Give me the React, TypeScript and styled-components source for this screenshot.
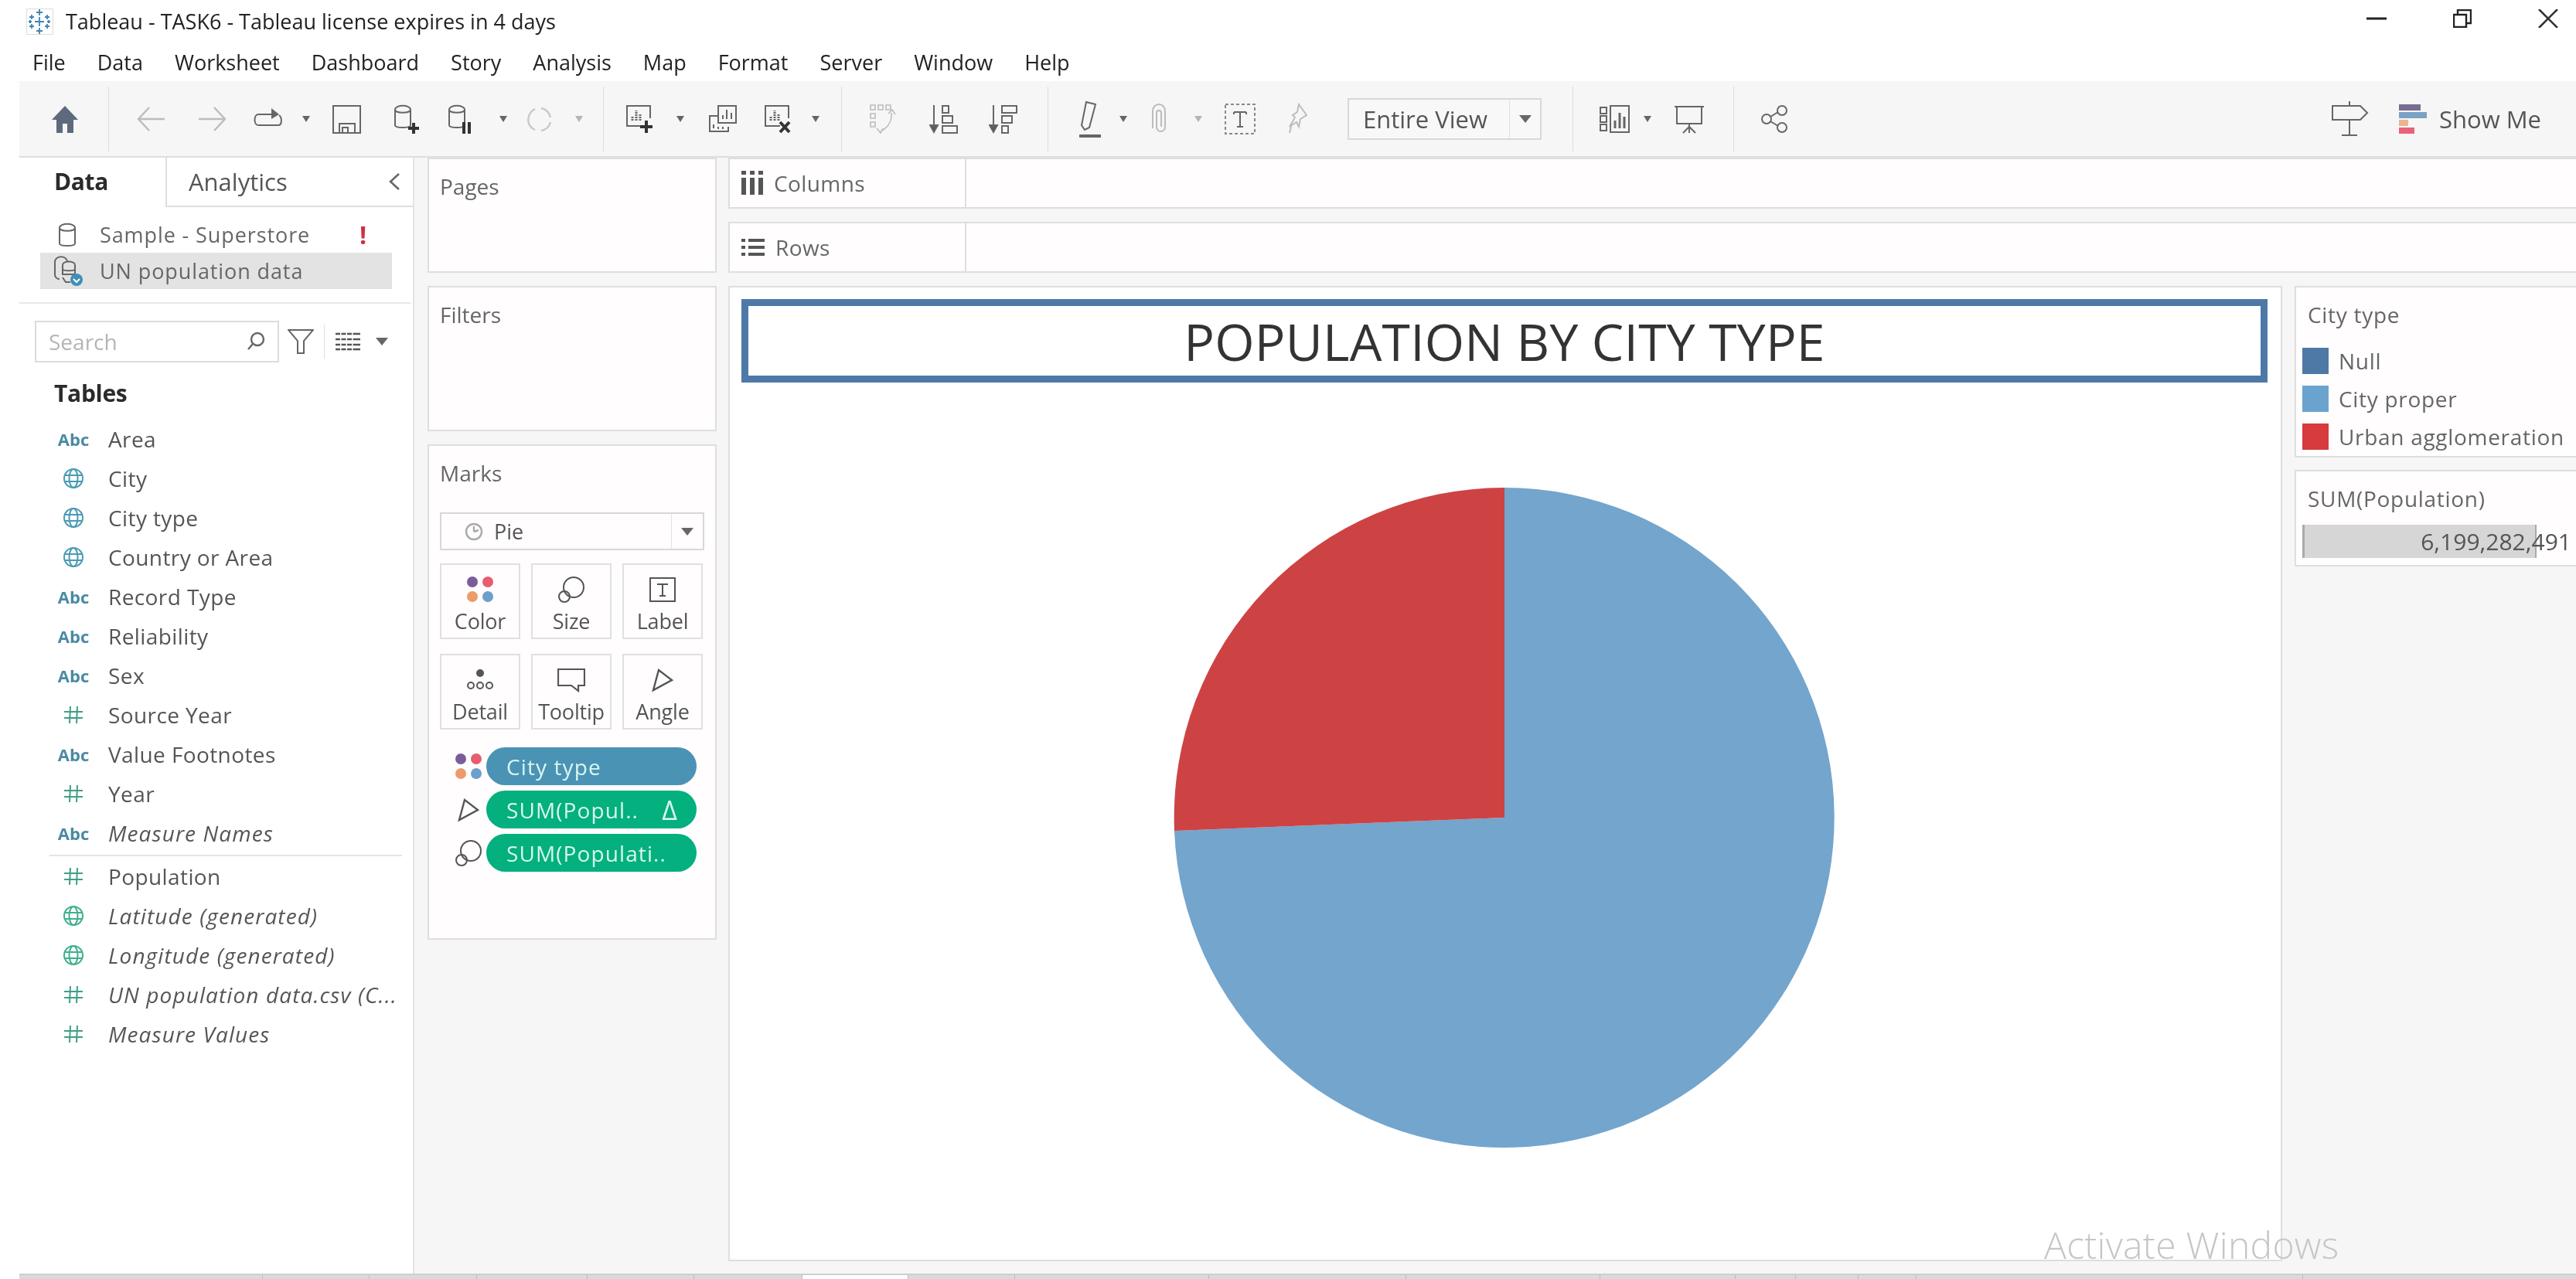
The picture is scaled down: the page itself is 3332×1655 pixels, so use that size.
import React from "react";
import styled, { createGlobalStyle } from "styled-components";

const GlobalStyle = createGlobalStyle`
	html, body {
		margin: 0;
		padding: 0;
		background: #fff;
		overflow: hidden;
	}
	* {
		box-sizing: border-box;
	}
`;

const Root = styled.div`
	position: relative;
	width: 3332px;
	height: 1655px;
	overflow: hidden;
	display: flex;
	flex-direction: column;
	background: #fff;
	font-family: "Open Sans", "Liberation Sans", sans-serif;
	color: #555;
	filter: blur(0.6px);
`;

const TitleBar = styled.div`
	height: 55px;
	display: flex;
	align-items: center;
	padding-left: 34px;
	flex: none;
`;

const TitleText = styled.span`
	margin-left: 16px;
	font-size: 27px;
	color: #222;
`;

const WindowButtons = styled.div`
	margin-left: auto;
	display: flex;
	align-items: center;
	gap: 86px;
	padding-right: 23px;
	height: 100%;
	padding-bottom: 8px;
`;

const MenuBar = styled.div`
	height: 50px;
	display: flex;
	align-items: center;
	padding-left: 42px;
	gap: 41px;
	flex: none;
`;

const MenuItem = styled.span`
	font-size: 27px;
	color: #222;
`;

const Toolbar = styled.div`
	height: 99px;
	margin-left: 25px;
	flex: none;
	display: flex;
	align-items: center;
	background: #f6f6f6;
	border-bottom: 2px solid #dedede;
	padding-right: 45px;
`;

const Slot = styled.div<{ $w?: number; $ml: number }>`
	flex: none;
	width: ${(p) => p.$w ?? 40}px;
	margin-left: ${(p) => p.$ml}px;
	height: 56px;
	display: flex;
	align-items: center;
	justify-content: center;
`;

const Sep = styled.div<{ $ml: number }>`
	flex: none;
	width: 1px;
	height: 84px;
	margin-left: ${(p) => p.$ml}px;
	background: #dcdcdc;
`;

const Caret = styled.i<{ $light?: boolean; $ml?: number; $big?: boolean }>`
	flex: none;
	display: block;
	width: 0;
	height: 0;
	margin-left: ${(p) => p.$ml ?? 0}px;
	border-left: ${(p) => (p.$big ? 8 : 5)}px solid transparent;
	border-right: ${(p) => (p.$big ? 8 : 5)}px solid transparent;
	border-top: ${(p) => (p.$big ? 10 : 8)}px solid ${(p) => (p.$light ? "#b5b5b5" : "#666")};
`;

const ViewSelect = styled.div`
	flex: none;
	width: 251px;
	height: 54px;
	margin-left: 45px;
	display: flex;
	align-items: center;
	border: 2px solid #d8d8d8;
	background: #f8f8f8;
`;

const ViewSelectText = styled.span`
	width: 208px;
	padding-left: 18px;
	font-size: 31px;
	color: #555;
	border-right: 1px solid #e0e0e0;
	line-height: 50px;
	white-space: nowrap;
`;

const ViewSelectArrow = styled.div`
	flex: 1;
	display: flex;
	justify-content: center;
`;

const ShowMe = styled.div`
	margin-left: auto;
	display: flex;
	align-items: center;
	font-size: 31px;
	color: #555;
`;

const ShowMeBars = styled.svg`
	margin-left: 38px;
`;

const ShowMeLabel = styled.span`
	margin-left: 16px;
`;

const Workspace = styled.div`
	flex: 1;
	display: flex;
	min-height: 0;
`;

const LeftPane = styled.aside`
	flex: none;
	width: 536px;
	padding-left: 25px;
	border-right: 2px solid #e3e3e3;
	background: #fff;
	display: flex;
	flex-direction: column;
`;

const Tabs = styled.div`
	height: 64px;
	display: flex;
	flex: none;
`;

const DataTab = styled.div`
	width: 189px;
	padding-left: 45px;
	line-height: 62px;
	font-size: 30px;
	font-weight: 700;
	color: #2b2b2b;
	letter-spacing: -0.4px;
`;

const AnalyticsTab = styled.div`
	flex: 1;
	display: flex;
	align-items: center;
	justify-content: space-between;
	padding: 0 16px 0 28px;
	border-left: 2px solid #dedede;
	border-bottom: 2px solid #dedede;
	font-size: 31px;
	color: #555;
`;

const SourceList = styled.div`
	flex: none;
	height: 125px;
	padding: 12px 0 0 27px;
	border-bottom: 2px solid #e8e8e8;
	margin-right: 3px;
`;

const SourceRow = styled.div<{ $active?: boolean }>`
	width: 455px;
	height: 47px;
	display: flex;
	align-items: center;
	padding-left: 20px;
	font-size: 27px;
	letter-spacing: 0.9px;
	color: #666;
	background: ${(p) => (p.$active ? "#e3e3e3" : "transparent")};
`;

const SourceName = styled.span`
	margin-left: 27px;
	flex: 1;
`;

const Bang = styled.span`
	color: #cf3045;
	font-size: 32px;
	font-weight: 700;
	margin-right: 32px;
`;

const SourceIcon = styled.svg`
	margin: 0 -9px 0 -5px;
	flex: none;
`;

const SearchRow = styled.div`
	flex: none;
	margin: 22px 0 0 20px;
	display: flex;
	align-items: center;
	height: 54px;
`;

const SearchBox = styled.div`
	width: 316px;
	height: 54px;
	border: 2px solid #dcdcdc;
	display: flex;
	align-items: center;
	justify-content: space-between;
	padding: 0 16px;
	font-size: 28px;
	color: #b5b5b5;
`;

const FilterIcon = styled.svg`
	margin-left: 11px;
	flex: none;
`;

const SearchSep = styled.div`
	width: 1px;
	height: 44px;
	background: #dedede;
	margin: 0 14px 0 13px;
`;

const TablesHead = styled.div`
	flex: none;
	margin: 18px 0 0 45px;
	font-size: 30px;
	font-weight: 700;
	color: #2b2b2b;
	letter-spacing: -0.3px;
	line-height: 44px;
`;

const FieldList = styled.div`
	margin-top: 11px;
	padding-left: 45px;
	display: flex;
	flex-direction: column;
`;

const FieldRow = styled.div`
	height: 51px;
	display: flex;
	align-items: center;
`;

const FieldRule = styled.div`
	height: 2px;
	width: 456px;
	margin: 3px 0 0 -6px;
	background: #e4e4e4;
`;

const FieldType = styled.div`
	width: 50px;
	display: flex;
	justify-content: center;
	font-size: 22px;
	font-weight: 700;
	color: #4a8aa3;
	flex: none;
`;

const FieldName = styled.span<{ $italic?: boolean }>`
	margin-left: 20px;
	font-size: 28px;
	letter-spacing: ${(p) => (p.$italic ? "1.1px" : "0.4px")};
	white-space: nowrap;
	color: #555;
	font-style: ${(p) => (p.$italic ? "italic" : "normal")};
`;

const ShelfColumn = styled.div`
	flex: none;
	width: 406px;
	background: #f6f6f6;
	padding: 0 15px 0 17px;
	display: flex;
	flex-direction: column;
	gap: 17px;
`;

const Card = styled.section<{ $h: number }>`
	flex: none;
	height: ${(p) => p.$h}px;
	background: #fffdfe;
	border: 2px solid #dedede;
	padding: 0 14px;
`;

const CardTitle = styled.div`
	font-size: 28px;
	line-height: 34px;
	padding-top: 18px;
	box-sizing: content-box;
	color: #666;
`;

const MarkSelect = styled.div`
	margin-top: 34px;
	height: 49px;
	border: 2px solid #d8d8d8;
	display: flex;
	align-items: center;
	font-size: 27px;
	color: #555;
`;

const MarkSelectLabel = styled.div`
	flex: 1;
	display: flex;
	align-items: center;
	gap: 14px;
	padding-left: 30px;
	border-right: 1px solid #e3e3e3;
	height: 100%;
`;

const MarkSelectArrow = styled.div`
	width: 40px;
	display: flex;
	justify-content: center;
`;

const MarkGrid = styled.div`
	margin-top: 17px;
	display: grid;
	grid-template-columns: repeat(3, 104px);
	grid-auto-rows: 98px;
	column-gap: 14px;
	row-gap: 19px;
`;

const MarkButton = styled.div`
	border: 2px solid #e0e0e0;
	display: flex;
	flex-direction: column;
	align-items: center;
	font-size: 27px;
	letter-spacing: -0.2px;
	color: #555;
	padding-top: 8px;
`;

const MarkIcon = styled.div`
	height: 48px;
	display: flex;
	align-items: center;
	justify-content: center;
`;

const MarkLabel = styled.span`
	line-height: 34px;
`;

const PillList = styled.div`
	margin-top: 23px;
	display: flex;
	flex-direction: column;
	gap: 7px;
`;

const PillRow = styled.div`
	display: flex;
	align-items: center;
	height: 49px;
`;

const PillIcon = styled.div`
	width: 60px;
	padding-left: 14px;
	display: flex;
	justify-content: center;
	flex: none;
`;

const Pill = styled.div<{ $kind: "dim" | "measure" }>`
	width: 272px;
	height: 49px;
	border-radius: 25px;
	background: ${(p) => (p.$kind === "dim" ? "#4a93b5" : "#03b07e")};
	color: #d9f6f0;
	font-size: 28px;
	letter-spacing: 1.1px;
	padding: 0 26px;
	display: flex;
	align-items: center;
	justify-content: space-between;
	white-space: nowrap;
`;

const Delta = styled.span`
	font-size: 34px;
	line-height: 40px;
	margin-right: -2px;
`;

const Main = styled.div`
	flex: 1;
	min-width: 0;
	background: #f6f6f6;
	display: flex;
	flex-direction: column;
	gap: 17px;
	padding-bottom: 16px;
`;

const Shelf = styled.div`
	flex: none;
	height: 66px;
	width: 2500px;
	background: #fffdfe;
	border: 2px solid #dedede;
	display: flex;
`;

const ShelfLabel = styled.div`
	width: 306px;
	display: flex;
	align-items: center;
	gap: 14px;
	padding-left: 15px;
	border-right: 2px solid #dedede;
	font-size: 28px;
	letter-spacing: 0.4px;
	color: #666;
`;

const Body = styled.div`
	flex: 1;
	min-height: 0;
	display: flex;
	gap: 16px;
`;

const View = styled.div`
	flex: none;
	width: 2010px;
	background: #fff;
	border: 2px solid #dedede;
	padding: 15px 17px 0 15px;
	display: flex;
	flex-direction: column;
`;

const ChartTitle = styled.h1`
	flex: none;
	margin: 0;
	height: 108px;
	border: 9px solid #4e79a7;
	display: flex;
	align-items: center;
	justify-content: center;
	font-size: 66px;
	font-weight: 400;
	color: #333;
	letter-spacing: 0.2px;
`;

const PieArea = styled.div`
	flex: 1;
	display: flex;
	align-items: center;
	justify-content: center;
	padding-bottom: 10px;
`;

const Legends = styled.div`
	width: 400px;
	flex: none;
	display: flex;
	flex-direction: column;
	gap: 16px;
`;

const LegendCard = styled.section<{ $h: number }>`
	height: ${(p) => p.$h}px;
	flex: none;
	background: #fffdfe;
	border: 2px solid #dedede;
	padding: 0 8px;
`;

const LegendTitle = styled.div`
	font-size: 28px;
	letter-spacing: 0.7px;
	line-height: 34px;
	padding: 18px 0 0 7px;
	box-sizing: content-box;
	color: #666;
`;

const LegendList = styled.div`
	margin-top: 26px;
	display: flex;
	flex-direction: column;
	gap: 15px;
`;

const LegendRow = styled.div`
	display: flex;
	align-items: center;
	height: 34px;
	font-size: 28px;
	letter-spacing: 0.7px;
	color: #666;
`;

const Swatch = styled.span<{ $c: string }>`
	width: 34px;
	height: 34px;
	margin-right: 13px;
	flex: none;
	background: ${(p) => p.$c};
`;

const SumBar = styled.div`
	position: relative;
	width: 303px;
	height: 43px;
	margin-top: 17px;
	background: #d6d6d6;
	border-left: 3px solid #aaa;
	border-right: 2px solid #aaa;
	font-size: 30px;
	line-height: 43px;
	color: #555;
`;

const SumValue = styled.span`
	position: absolute;
	right: -47px;
	top: 0;
	white-space: nowrap;
`;

const BottomStrip = styled.div`
	flex: none;
	height: 7px;
	margin-left: 25px;
	background: #dadada;
	border-top: 2px solid #cfcfcf;
	display: flex;
`;

const SheetTab = styled.div<{ $w: number; $active?: boolean }>`
	flex: none;
	width: ${(p) => p.$w}px;
	background: ${(p) => (p.$active ? "#fff" : "transparent")};
	border-right: 1px solid #bbb;
`;

const Watermark = styled.div`
	position: absolute;
	left: 2644px;
	top: 1581px;
	font-size: 48px;
	font-weight: 300;
	letter-spacing: 0.3px;
	line-height: 60px;
	color: #c6c6c6;
`;

const stroke = "#666";
const faint = "#bcbcbc";

function Icon({
	w = 40,
	h = 40,
	c = stroke,
	sw = 2,
	children,
}: {
	w?: number;
	h?: number;
	c?: string;
	sw?: number;
	children: React.ReactNode;
}) {
	return (
		<svg width={w} height={h} viewBox={`0 0 ${w} ${h}`} fill="none" stroke={c} strokeWidth={sw}>
			{children}
		</svg>
	);
}

function TableauLogo() {
	const plus = [
		[17, 4, 4],
		[17, 16, 6],
		[17, 28, 4],
		[7, 10, 3],
		[27, 10, 3],
		[7, 22, 3],
		[27, 22, 3],
		[5, 16, 2],
		[29, 16, 2],
	];
	return (
		<svg width="35" height="34" viewBox="0 0 35 34" fill="none" stroke="#3f86b4" strokeWidth="1.8">
			<rect x="0.5" y="0.5" width="34" height="33" stroke="#dcdcdc" strokeWidth="1" />
			{plus.map(([x, y, s]) => (
				<path key={`${x}-${y}`} d={`M${x - s} ${y + 1}h${s * 2}M${x} ${y + 1 - s}v${s * 2}`} />
			))}
		</svg>
	);
}

const Cylinder = ({ c = stroke }: { c?: string }) => (
	<path
		d="M5 8c0-7 20-7 20 0v20c0 4-20 4-20 0zM5 8c0 5 20 5 20 0"
		stroke={c}
		fill="none"
	/>
);

function BarsBox({ mark }: { mark: "plus" | "x" }) {
	return (
		<Icon>
			<path d="M22 29H3V3h30v16" />
			<path d="M10 22v-6M15 22V9M20 22V13" strokeWidth="3" strokeDasharray="2 1" />
			{mark === "plus" ? (
				<path d="M28 22v16M20 30h16" strokeWidth="4" stroke="#333" />
			) : (
				<path d="M22 24l12 13M34 24L22 37" strokeWidth="4" stroke="#333" />
			)}
		</Icon>
	);
}

function Globe({ c }: { c: string }) {
	return (
		<svg width="28" height="28" viewBox="0 0 28 28" fill="none" stroke={c} strokeWidth="2">
			<circle cx="14" cy="14" r="12" />
			<ellipse cx="14" cy="14" rx="5.5" ry="12" />
			<path d="M3 10h22M3 18h22" />
		</svg>
	);
}

function Hash() {
	return (
		<svg width="28" height="24" viewBox="0 0 28 24" fill="none" stroke="#3f9f87" strokeWidth="2">
			<path d="M10 1L9 23M19 1l-1 22M2 8h24M2 16h24" />
		</svg>
	);
}

function ColorDots() {
	return (
		<svg width="36" height="36" viewBox="0 0 36 36">
			<circle cx="8" cy="8" r="7" fill="#7b5c9b" />
			<circle cx="28" cy="8" r="7" fill="#e85d6f" />
			<circle cx="8" cy="27" r="7" fill="#ec9c6a" />
			<circle cx="28" cy="27" r="7" fill="#6c9fc9" />
		</svg>
	);
}

function SizeIcon() {
	return (
		<svg width="36" height="36" viewBox="0 0 36 36" fill="none" stroke="#555" strokeWidth="2">
			<circle cx="21" cy="15" r="13" />
			<circle cx="9" cy="27" r="7" />
		</svg>
	);
}

function AngleIcon() {
	return (
		<svg width="30" height="32" viewBox="0 0 30 32" fill="none" stroke="#555" strokeWidth="2.4">
			<path d="M3 29L10 3l17 13z" />
		</svg>
	);
}

type Field = { name: string; kind: "abc" | "globe" | "hash" | "mglobe"; italic?: boolean };

const dimensions: Field[] = [
	{ name: "Area", kind: "abc" },
	{ name: "City", kind: "globe" },
	{ name: "City type", kind: "globe" },
	{ name: "Country or Area", kind: "globe" },
	{ name: "Record Type", kind: "abc" },
	{ name: "Reliability", kind: "abc" },
	{ name: "Sex", kind: "abc" },
	{ name: "Source Year", kind: "hash" },
	{ name: "Value Footnotes", kind: "abc" },
	{ name: "Year", kind: "hash" },
	{ name: "Measure Names", kind: "abc", italic: true },
];

const measures: Field[] = [
	{ name: "Population", kind: "hash" },
	{ name: "Latitude (generated)", kind: "mglobe", italic: true },
	{ name: "Longitude (generated)", kind: "mglobe", italic: true },
	{ name: "UN population data.csv (C...", kind: "hash", italic: true },
	{ name: "Measure Values", kind: "hash", italic: true },
];

function FieldItem({ field }: { field: Field }) {
	return (
		<FieldRow>
			<FieldType>
				{field.kind === "abc" && "Abc"}
				{field.kind === "globe" && <Globe c="#4a9ab5" />}
				{field.kind === "mglobe" && <Globe c="#3fb08f" />}
				{field.kind === "hash" && <Hash />}
			</FieldType>
			<FieldName $italic={field.italic}>{field.name}</FieldName>
		</FieldRow>
	);
}

const sheetTabs = [315, 138, 139, 143, 138, 140, 137, 138, 251, 255, 251, 175, 78, 81, 75, 500];

export default function App() {
	return (
		<Root>
			<GlobalStyle />
			<TitleBar>
				<TableauLogo />
				<TitleText>Tableau - TASK6 - Tableau license expires in 4 days</TitleText>
				<WindowButtons>
					<svg width="26" height="4" viewBox="0 0 26 4">
						<rect width="26" height="3" y="0.5" fill="#222" />
					</svg>
					<svg width="24" height="24" viewBox="0 0 24 24" fill="none" stroke="#222" strokeWidth="2.4">
						<path d="M1 7h16v16H1zM6 6V1h17v17h-5" />
					</svg>
					<svg width="26" height="24" viewBox="0 0 26 24" fill="none" stroke="#333" strokeWidth="2.6">
						<path d="M1 0l24 24M25 0L1 24" />
					</svg>
				</WindowButtons>
			</TitleBar>
			<MenuBar>
				{["File", "Data", "Worksheet", "Dashboard", "Story", "Analysis", "Map", "Format", "Server", "Window", "Help"].map(
					(item) => (
						<MenuItem key={item}>{item}</MenuItem>
					)
				)}
			</MenuBar>
			<Toolbar>
				<Slot $w={44} $ml={37}>
					<svg width="40" height="40" viewBox="0 0 40 40" fill="#5d6a7d">
						<path d="M20 3L3 21h6v17h8V26h6v12h8V21h6z" />
					</svg>
				</Slot>
				<Sep $ml={34} />
				<Slot $ml={34}>
					<Icon c={faint} sw={2.4}>
						<path d="M38 20H4M18 5L4 20l14 15" />
					</Icon>
				</Slot>
				<Slot $ml={40}>
					<Icon c={faint} sw={2.4}>
						<path d="M2 20h34M22 5l14 15-14 15" />
					</Icon>
				</Slot>
				<Slot $ml={32}>
					<Icon>
						<path d="M29 14H7c-6 0-6 14 0 14h26c5 0 5-10 1-13" />
						<path d="M24 6l10 8-10 6z" fill="#666" stroke="none" />
					</Icon>
				</Slot>
				<Slot $w={12} $ml={23}>
					<Caret />
				</Slot>
				<Slot $ml={27}>
					<Icon>
						<path d="M2 3h35v35H2z" />
						<path d="M10 38V26h20v12M14 38v-7h7v7" />
					</Icon>
				</Slot>
				<Slot $ml={37}>
					<Icon>
						<Cylinder />
						<path d="M27 24v14M20 31h14" strokeWidth="4" stroke="#333" transform="translate(2 1)" />
					</Icon>
				</Slot>
				<Slot $ml={30}>
					<Icon>
						<Cylinder />
						<path d="M24 24v15M31 24v15" strokeWidth="4" stroke="#333" />
					</Icon>
				</Slot>
				<Slot $w={12} $ml={29}>
					<Caret />
				</Slot>
				<Slot $ml={21}>
					<Icon c="#c8c8c8" sw={2.4}>
						<path d="M6 26A16 16 0 0 1 14 7M14 34a16 16 0 0 1-8-8M22 6a15 15 0 0 1 12 12M34 24a15 15 0 0 1-12 11" />
					</Icon>
				</Slot>
				<Slot $w={12} $ml={25}>
					<Caret $light />
				</Slot>
				<Sep $ml={25} />
				<Slot $ml={27}>
					<BarsBox mark="plus" />
				</Slot>
				<Slot $w={12} $ml={26}>
					<Caret />
				</Slot>
				<Slot $ml={29}>
					<Icon>
						<path d="M14 16H3v20h24v-6" />
						<path d="M14 3h23v22H14z" />
						<path d="M20 20v-5M25 20V8M31 20v-8M8 27v5M14 30v3M20 30v3" strokeWidth="2" />
					</Icon>
				</Slot>
				<Slot $ml={32}>
					<BarsBox mark="x" />
				</Slot>
				<Slot $w={12} $ml={22}>
					<Caret />
				</Slot>
				<Sep $ml={27} />
				<Slot $ml={32}>
					<Icon c={faint} sw={1.6}>
						<path d="M5 2h6v6H5zM15 2h6v6h-6zM25 2h6v6h-6zM5 13h6v6H5zM5 24h6v6H5z" />
						<path d="M32 12c1 12-6 20-14 24" />
						<path d="M28 13l5-5 4 6M13 32l5 6 3-6" />
					</Icon>
				</Slot>
				<Slot $ml={41}>
					<Icon>
						<path d="M6 2v30M1 28l5 9 5-9z" fill="#555" />
						<path d="M17 3h8v9h-8zM17 16h13v9H17zM17 29h19v9H17z" />
					</Icon>
				</Slot>
				<Slot $ml={37}>
					<Icon>
						<path d="M6 2v30M1 28l5 9 5-9z" fill="#555" />
						<path d="M17 3h19v9H17zM17 16h13v9H17zM17 29h8v9h-8z" />
					</Icon>
				</Slot>
				<Sep $ml={36} />
				<Slot $ml={35}>
					<Icon h={56}>
						<path d="M14 6l12 3-8 30-6 3-4-6z" />
						<path d="M5 50h28" strokeWidth="4" stroke="#666" />
					</Icon>
				</Slot>
				<Slot $w={12} $ml={16}>
					<Caret />
				</Slot>
				<Slot $ml={20}>
					<Icon h={44} c={faint} sw={2}>
						<path d="M12 34V12c0-12 16-12 16 0v20c0 8-11 8-11 0V14c0-4 6-4 6 0v18" />
					</Icon>
				</Slot>
				<Slot $w={12} $ml={25}>
					<Caret $light />
				</Slot>
				<Slot $ml={28}>
					<Icon h={40} c="#888">
						<path d="M1 1h38v38H1z" strokeDasharray="4 3" />
						<path d="M12 11h16M20 11v19M16 30h8M12 11v3M28 11v3" stroke="#666" />
					</Icon>
				</Slot>
				<Slot $ml={34}>
					<Icon h={44} c={faint}>
						<path d="M22 3l10 14-8 5-2 10-3-6-9 6 7-12-3-3 6-4z" />
						<path d="M12 32l-2 8" />
					</Icon>
				</Slot>
				<ViewSelect>
					<ViewSelectText>Entire View</ViewSelectText>
					<ViewSelectArrow>
						<Caret $big />
					</ViewSelectArrow>
				</ViewSelect>
				<Sep $ml={40} />
				<Slot $ml={34}>
					<Icon>
						<path d="M1 5h8v8H1zM1 16h8v8H1zM1 27h8v8H1zM14 3h24v34H14z" />
						<path d="M20 32V22M26 32V12M32 32V17" strokeWidth="3" />
					</Icon>
				</Slot>
				<Slot $w={12} $ml={16}>
					<Caret />
				</Slot>
				<Slot $ml={28}>
					<Icon>
						<path d="M1 4h38M4 4v22h32V4M20 26v12M12 38l8-8 8 8" />
					</Icon>
				</Slot>
				<Sep $ml={37} />
				<Slot $ml={34}>
					<Icon>
						<circle cx="8" cy="20" r="6" />
						<circle cx="28" cy="9" r="6" />
						<circle cx="28" cy="31" r="6" />
						<path d="M13 17l10-6M13 23l10 6" />
					</Icon>
				</Slot>
				<ShowMe>
					<svg width="50" height="46" viewBox="0 0 50 46" fill="none" stroke="#666" strokeWidth="2">
						<path d="M2 6h36l9 9-9 9H2zM24 0v6M24 24v20M14 44h20" />
					</svg>
					<ShowMeBars width="36" height="40" viewBox="0 0 36 40">
						<rect width="28" height="8" y="1" fill="#7a6c95" />
						<rect width="36" height="8" y="11" fill="#7ba2c4" />
						<rect width="12" height="8" y="21" fill="#ecb38f" />
						<rect width="20" height="8" y="31" fill="#e9627a" />
					</ShowMeBars>
					<ShowMeLabel>Show Me</ShowMeLabel>
				</ShowMe>
			</Toolbar>
			<Workspace>
				<LeftPane>
					<Tabs>
						<DataTab>Data</DataTab>
						<AnalyticsTab>
							Analytics
							<svg width="16" height="24" viewBox="0 0 16 24" fill="none" stroke="#666" strokeWidth="2.6">
								<path d="M14 2L3 12l11 10" />
							</svg>
						</AnalyticsTab>
					</Tabs>
					<SourceList>
						<SourceRow>
							<svg width="30" height="34" viewBox="0 0 30 34" fill="none" stroke="#666" strokeWidth="2">
								<Cylinder />
							</svg>
							<SourceName>Sample - Superstore</SourceName>
							<Bang>!</Bang>
						</SourceRow>
						<SourceRow $active>
							<SourceIcon width="44" height="44" viewBox="0 0 44 44" fill="none" stroke="#666" strokeWidth="2">
								<path d="M4 26V10c0-9 16-9 16 0M10 32c-4 0-6-3-6-6" />
								<path d="M14 14c0-6 16-6 16 0v12H14z" />
								<path d="M14 19c0 3 16 3 16 0M14 30l4 6h6" />
								<circle cx="32" cy="33" r="8" fill="#3f8fb8" stroke="none" />
								<path d="M28 32l4 4 4-4" stroke="#fff" />
							</SourceIcon>
							<SourceName>UN population data</SourceName>
						</SourceRow>
					</SourceList>
					<SearchRow>
						<SearchBox>
							Search
							<svg width="24" height="26" viewBox="0 0 24 26" fill="none" stroke="#666" strokeWidth="2.4">
								<circle cx="14" cy="10" r="8" />
								<path d="M8 16l-6 7" />
							</svg>
						</SearchBox>
						<FilterIcon width="34" height="32" viewBox="0 0 34 32" fill="none" stroke="#666" strokeWidth="2">
							<path d="M1 1h32L21 15v16h-8V15z" />
						</FilterIcon>
						<SearchSep />
						<svg width="32" height="24" viewBox="0 0 32 24" fill="none" stroke="#555" strokeWidth="2.4">
							<path
								d="M0 2h32M0 9h32M0 16h32M0 22h32"
								strokeDasharray="6 1.5 6 1.5 6 1.5 9.5 0"
							/>
						</svg>
						<Caret $ml={20} $big />
					</SearchRow>
					<TablesHead>Tables</TablesHead>
					<FieldList>
						{dimensions.map((f) => (
							<FieldItem key={f.name} field={f} />
						))}
						<FieldRule />
						{measures.map((f) => (
							<FieldItem key={f.name} field={f} />
						))}
					</FieldList>
				</LeftPane>
				<ShelfColumn>
					<Card $h={149}>
						<CardTitle>Pages</CardTitle>
					</Card>
					<Card $h={188}>
						<CardTitle>Filters</CardTitle>
					</Card>
					<Card $h={641}>
						<CardTitle>Marks</CardTitle>
						<MarkSelect>
							<MarkSelectLabel>
								<svg width="24" height="24" viewBox="0 0 24 24" fill="none" stroke="#aaa" strokeWidth="2.4">
									<circle cx="12" cy="12" r="10" />
									<path d="M12 12V5M12 12l6-2" />
								</svg>
								Pie
							</MarkSelectLabel>
							<MarkSelectArrow>
								<Caret $big />
							</MarkSelectArrow>
						</MarkSelect>
						<MarkGrid>
							<MarkButton>
								<MarkIcon>
									<ColorDots />
								</MarkIcon>
								<MarkLabel>Color</MarkLabel>
							</MarkButton>
							<MarkButton>
								<MarkIcon>
									<SizeIcon />
								</MarkIcon>
								<MarkLabel>Size</MarkLabel>
							</MarkButton>
							<MarkButton>
								<MarkIcon>
									<svg width="34" height="32" viewBox="0 0 34 32" fill="none" stroke="#555" strokeWidth="2">
										<path d="M1 1h32v30H1zM10 9h14M17 9v15M13 24h8" />
									</svg>
								</MarkIcon>
								<MarkLabel>Label</MarkLabel>
							</MarkButton>
							<MarkButton>
								<MarkIcon>
									<svg width="36" height="28" viewBox="0 0 36 28" fill="none" stroke="#555" strokeWidth="2">
										<circle cx="18" cy="5" r="4" fill="#555" />
										<circle cx="6" cy="21" r="4" />
										<circle cx="18" cy="21" r="4" />
										<circle cx="30" cy="21" r="4" />
									</svg>
								</MarkIcon>
								<MarkLabel>Detail</MarkLabel>
							</MarkButton>
							<MarkButton>
								<MarkIcon>
									<svg width="36" height="32" viewBox="0 0 36 32" fill="none" stroke="#555" strokeWidth="2.2">
										<path d="M1 2h34v21H27v7l-9-7H1z" />
									</svg>
								</MarkIcon>
								<MarkLabel>Tooltip</MarkLabel>
							</MarkButton>
							<MarkButton>
								<MarkIcon>
									<AngleIcon />
								</MarkIcon>
								<MarkLabel>Angle</MarkLabel>
							</MarkButton>
						</MarkGrid>
						<PillList>
							<PillRow>
								<PillIcon>
									<ColorDots />
								</PillIcon>
								<Pill $kind="dim">City type</Pill>
							</PillRow>
							<PillRow>
								<PillIcon>
									<AngleIcon />
								</PillIcon>
								<Pill $kind="measure">
									SUM(Popul..
									<Delta>Δ</Delta>
								</Pill>
							</PillRow>
							<PillRow>
								<PillIcon>
									<SizeIcon />
								</PillIcon>
								<Pill $kind="measure">SUM(Populati..</Pill>
							</PillRow>
						</PillList>
					</Card>
				</ShelfColumn>
				<Main>
					<Shelf>
						<ShelfLabel>
							<svg width="28" height="32" viewBox="0 0 28 32" fill="#555">
								<path d="M0 0h6v5H0zM11 0h6v5h-6zM22 0h6v5h-6zM0 9h6v22H0zM11 9h6v22h-6zM22 9h6v22h-6z" />
							</svg>
							Columns
						</ShelfLabel>
					</Shelf>
					<Shelf>
						<ShelfLabel>
							<svg width="30" height="24" viewBox="0 0 30 24" fill="#555">
								<path d="M0 1h5v4H0zM9 1h21v4H9zM0 10h5v4H0zM9 10h21v4H9zM0 19h5v4H0zM9 19h21v4H9z" />
							</svg>
							Rows
						</ShelfLabel>
					</Shelf>
					<Body>
						<View>
							<ChartTitle>POPULATION BY CITY TYPE</ChartTitle>
							<PieArea>
								<svg width="856" height="856" viewBox="-428 -428 856 856">
									<path d="M0 0L0 -427A427 427 0 1 1 -427 17Z" fill="#73a5cd" />
									<path d="M0 0L-427 17A427 427 0 0 1 0 -427Z" fill="#cd4344" />
								</svg>
							</PieArea>
						</View>
						<Legends>
							<LegendCard $h={222}>
								<LegendTitle>City type</LegendTitle>
								<LegendList>
									<LegendRow>
										<Swatch $c="#4e79a7" />
										Null
									</LegendRow>
									<LegendRow>
										<Swatch $c="#6ba3cf" />
										City proper
									</LegendRow>
									<LegendRow>
										<Swatch $c="#d83b3d" />
										Urban agglomeration
									</LegendRow>
								</LegendList>
							</LegendCard>
							<LegendCard $h={125}>
								<LegendTitle>SUM(Population)</LegendTitle>
								<SumBar>
									<SumValue>6,199,282,491</SumValue>
								</SumBar>
							</LegendCard>
						</Legends>
					</Body>
				</Main>
			</Workspace>
			<BottomStrip>
				{sheetTabs.map((w, i) => (
					<SheetTab key={i} $w={w} $active={i === 6} />
				))}
			</BottomStrip>
			<Watermark>Activate Windows</Watermark>
		</Root>
	);
}
